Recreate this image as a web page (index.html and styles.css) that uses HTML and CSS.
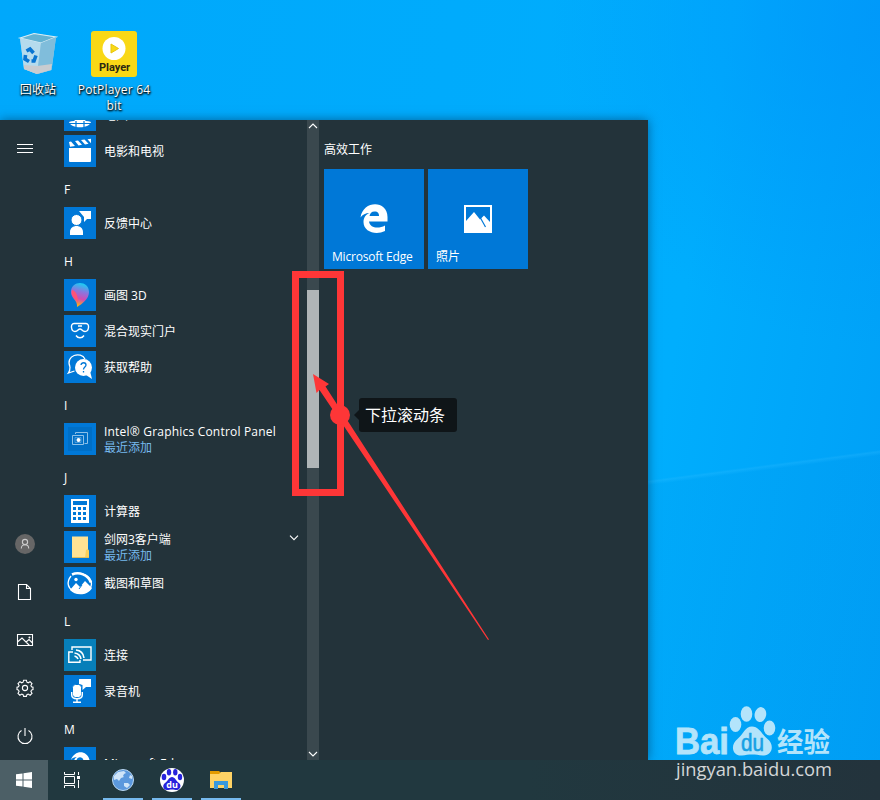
FILE: index.html
```html
<!DOCTYPE html>
<html lang="zh-CN">
<head>
  <meta charset="UTF-8">
  <meta name="viewport" content="width=device-width, initial-scale=1.0">
  <title>开始菜单</title>
  <link rel="stylesheet" href="styles.css">
</head>
<body>
  <div class="screen">
    <!-- Desktop icons -->
    <div class="desktop">
      <div class="shortcut">
        <svg width="48" height="48" viewBox="0 0 48 48">
          <path d="M6 8 L20 3.500 L42 7 L37.500 40 L23 44 L10 39 Z" fill="#9fcfe6"/>
          <path d="M6 8 L20 3.500 L42 7 L27 13 Z" fill="#64b2d2" stroke="#d8edf5" stroke-width="1.200"/>
          <path d="M6 8 L27 13 L23 44 L10 39 Z" fill="#b5dbed"/>
          <path d="M27 13 L42 7 L37.500 40 L23 44 Z" fill="#80bddb"/>
          <path d="M10 35 L23 36 L38 34 L37 40 L23 44 L10 39 Z" fill="#c9ccd0"/>
          <g fill="none" stroke="#0874d1" stroke-width="3.600">
            <path d="M12.500 21 L16 19 L19.500 23"/>
            <path d="M22 25.500 L20 31 L17.500 31"/>
            <path d="M15 31.500 L11 29 L11.500 25"/>
          </g>
        </svg>
        <span>回收站</span>
      </div>
      <div class="shortcut">
        <svg width="48" height="48" viewBox="0 0 48 48">
          <rect x="1" y="1" width="46" height="46" rx="3" fill="#f9d816"/>
          <circle cx="24" cy="18.500" r="11.500" fill="#fff"/>
          <path d="M21 14 L28.500 18.500 L21 23 Z" fill="#f9d816" stroke="#e8c60c"/>
          <text class="player-text" x="24.500" y="41" text-anchor="middle">Player</text>
        </svg>
        <span>PotPlayer 64<br>bit</span>
      </div>
    </div>

    <!-- Start menu -->
    <div class="start-menu">
      <div class="rail">
        <svg class="rail-menu" width="18" height="18" viewBox="0 0 18 18"><path d="M1 4.500h16M1 8.500h16M1 12.500h16"/></svg>
        <div class="rail-bottom">
          <svg width="20" height="20" viewBox="0 0 20 20">
            <circle cx="10" cy="10" r="10" fill="#666" stroke="none"/>
            <g stroke="#ccc"><circle cx="10" cy="8" r="2.600"/><path d="M6.300 14.500c0-5 7.400-5 7.400 0"/></g>
          </svg>
          <svg width="20" height="20" viewBox="0 0 20 20"><path d="M3.500 2.500h8l4 4v11h-12zM11.500 2.500v4h4"/></svg>
          <svg width="20" height="20" viewBox="0 0 20 20"><path d="M2.500 4.500h15v11h-15zM2.500 12l4.500-4 7.500 7.500M11 12l3-2.500 3.500 3.500"/><circle cx="14.500" cy="7.500" r=".5"/></svg>
          <svg width="20" height="20" viewBox="0 0 20 20">
            <circle cx="10" cy="10" r="2.600"/>
            <path d="M8.600 2.200h2.800l.5 2 1.300.6 1.900-1.100 1.900 1.900-1.100 1.900.6 1.300 1.500.4v2.400l-1.500.5-.6 1.300 1.100 1.900-1.900 1.900-1.900-1.100-1.300.6-.5 1.700H8.600l-.5-1.700-1.300-.6-1.900 1.100L3 15.300l1.100-1.900-.6-1.300-1.500-.5V9.200l1.500-.4.600-1.300L3 5.600l1.900-1.900 1.900 1.100 1.300-.6z"/>
          </svg>
          <svg width="20" height="20" viewBox="0 0 20 20"><path d="M6.500 4.500a7 7 0 1 0 7 0M10 2v8"/></svg>
        </div>
      </div>

      <div class="apps">
        <div class="app">
          <svg class="app-icon" viewBox="0 0 32 32">
            <circle cx="16" cy="17" r="7" fill="#fff"/>
            <path d="M5 23c6-2 16-2 22 0-2 7-20 7-22 0z" fill="#fff"/>
            <path d="M5 24.500h22M12 22v6M20 22v6" stroke="#0078d7" stroke-width="1.200"/>
          </svg>
          <div class="app-name">地图</div>
        </div>
        <div class="app">
          <svg class="app-icon" viewBox="0 0 32 32">
            <path d="M5 13h22v13q0 1-1 1H6q-1 0-1-1z" fill="#fff"/>
            <path d="M5 7l2-.5 4 4.500-5 .8zM11 6l3-.5 4 4.300-3.500.6zM17 5l3.500-.5 4 4.300-3.500.6zM23.500 4.200l3.500-.4v4.400z" fill="#fff"/>
          </svg>
          <div class="app-name">电影和电视</div>
        </div>
        <div class="letter">F</div>
        <div class="app">
          <svg class="app-icon" viewBox="0 0 32 32">
            <path d="M6 28v-3c0-8 13-8 13 0v3zM15 4h12v8h-4l-3 3v-5z" fill="#fff"/>
            <circle cx="12.500" cy="13" r="5.500" fill="#fff" stroke="#0078d7"/>
          </svg>
          <div class="app-name">反馈中心</div>
        </div>
        <div class="letter">H</div>
        <div class="app">
          <svg class="app-icon" viewBox="0 0 32 32">
            <defs>
              <linearGradient id="drop" x1="0.600" y1="0" x2="0.400" y2="1">
                <stop offset="0" stop-color="#17d1f5"/>
                <stop offset=".35" stop-color="#8977df"/>
                <stop offset=".65" stop-color="#d04cb4"/>
                <stop offset="1" stop-color="#ffbd00"/>
              </linearGradient>
            </defs>
            <path d="M13 28c1-7-6-8-6-15 0-12 18-12 18 0 0 7-7 12-12 15z" fill="url(#drop)"/>
            <path d="M8 11c4 1 6 5 6 13-2-5-8-6-6-13z" fill="#ff5376"/>
          </svg>
          <div class="app-name">画图 3D</div>
        </div>
        <div class="app">
          <svg class="app-icon line" viewBox="0 0 32 32">
            <path d="M10 8.500h12c4 0 3 8-1 8-3 0-3-2.500-5-2.500s-2 2.500-5 2.500c-4 0-5-8-1-8zM12 20.500c2 3 6 3 8 0M14 11h4"/>
          </svg>
          <div class="app-name">混合现实门户</div>
        </div>
        <div class="app">
          <svg class="app-icon" viewBox="0 0 32 32">
            <path d="M6 16c-5-12 11-16 15-8M6 16c0 2 0 4-1.500 6l6-2" fill="none" stroke="#fff" stroke-width="1.300"/>
            <circle cx="19.500" cy="16.500" r="8.500" fill="#fff"/>
            <path d="M22 24l6 4-2-8z" fill="#fff"/>
            <path d="M17 14c.5-3 5-3 5 0 0 2-2.500 2-2.500 4.500M19.500 20v1.500" fill="none" stroke="#0078d7" stroke-width="1.300"/>
          </svg>
          <div class="app-name">获取帮助</div>
        </div>
        <div class="letter">I</div>
        <div class="app">
          <svg class="app-icon" viewBox="0 0 32 32">
            <path d="M4 4h24v24H4z" fill="#006fc6"/>
            <g fill="none" stroke="#8cc0e8">
              <path d="M11.500 11V9.500h12v11h-3M8.500 12.500h11v9h-11z"/>
              <path d="M11 14.500h6v5h-6z" opacity=".5"/>
            </g>
            <circle cx="14.500" cy="17" r="2" fill="#fff"/>
          </svg>
          <div class="app-name wide">Intel® Graphics Control Panel<span class="recent">最近添加</span></div>
        </div>
        <div class="letter">J</div>
        <div class="app">
          <svg class="app-icon" viewBox="0 0 32 32">
            <path d="M7 4h18v24H7z" fill="#fff"/>
            <path d="M9 6h14v4H9zM9 12h3v3H9zM14 12h3v3h-3zM19 12h3v3h-3zM9 17h3v3H9zM14 17h3v3h-3zM19 17h3v3h-3zM9 22h3v3H9zM14 22h3v3h-3zM19 22h3v3h-3z" fill="#0078d7"/>
          </svg>
          <div class="app-name">计算器</div>
        </div>
        <div class="app">
          <svg class="app-icon" viewBox="0 0 32 32">
            <path d="M8 5.500h16V19l1 1v7H8z" fill="#ffe293"/>
            <path d="M21 27l1-8 2-1 1 2v7z" fill="#fbcf59"/>
            <path d="M8 26h17v1H8z" fill="#dfbd5c"/>
          </svg>
          <div class="app-name">剑网3客户端<span class="recent">最近添加</span></div>
          <svg class="chevron" width="10" height="6" viewBox="0 0 10 6"><path d="M1 .7l4 4 4-4"/></svg>
        </div>
        <div class="app">
          <svg class="app-icon" viewBox="0 0 32 32">
            <path d="M7 9c-10 13 9 22 18 14 5-6 2-14-7-16" fill="none" stroke="#fff" stroke-width="1.300"/>
            <path d="M6 23l6-7 4 4 5-6 7 7c-4 8-17 8-22 2z" fill="#fff"/>
            <path d="M8 7.500c7-3 16 0 19 8" fill="none" stroke="#fff" stroke-width="2.600"/>
            <circle cx="12" cy="12.500" r="1.700" fill="#fff"/>
            <path d="M15 22l3-4" stroke="#0078d7"/>
          </svg>
          <div class="app-name">截图和草图</div>
        </div>
        <div class="letter">L</div>
        <div class="app">
          <svg class="app-icon teal line" viewBox="0 0 32 32">
            <path d="M8 11V8h19v13h-8M9 13H4.800v10.200H16V21"/>
            <path d="M10.500 17c2 .5 3 1.500 3.500 3M10.500 14c4 .5 6 3 6.500 6M12 11c5 .5 7.500 4 8 8" stroke-width="1.600"/>
          </svg>
          <div class="app-name">连接</div>
        </div>
        <div class="app">
          <svg class="app-icon" viewBox="0 0 32 32">
            <path d="M15 4h12v8h-5l-3.500 3v-5L15 9z" fill="#fff"/>
            <rect x="8.500" y="9.500" width="9" height="13" rx="3" fill="#fff" stroke="#0078d7"/>
            <path d="M7.700 17v3c0 5 10.600 5 10.600 0v-3M13 24v3M9 27.300h8" fill="none" stroke="#fff" stroke-width="1.400"/>
          </svg>
          <div class="app-name">录音机</div>
        </div>
        <div class="letter">M</div>
        <div class="app">
          <svg class="app-icon" viewBox="0 0 32 32">
            <path d="M6 17C8 1 26 2 26 17H12c1-7 8-6 8-1" fill="#fff"/>
            <path d="M6 14c2-3 4-4 7-4-2 1-3 3-3 5H6zM12.500 14c0-5 7-5 7 0z" fill="#0078d7"/>
          </svg>
          <div class="app-name">Microsoft Edge</div>
        </div>
      </div>

      <div class="scrollbar">
        <svg width="10" height="6" viewBox="0 0 10 6"><path d="M1 5l4-4 4 4"/></svg>
        <div class="thumb"></div>
        <svg width="10" height="6" viewBox="0 0 10 6"><path d="M1 1l4 4 4-4"/></svg>
      </div>

      <div class="tiles">
        <div class="tiles-title">高效工作</div>
        <div class="tile-row">
          <div class="tile">
            <svg width="30" height="30" viewBox="0 0 30 30">
              <path d="M1.500 13.500C4-4 28.500-4 28.500 13v4.500H10c1 7 10 7.500 16 4v5.500C17 31.500 4.500 28 4.500 18c0-5 3-8 6-9-4 0-7 1.500-9 4.500z" fill="#fff"/>
              <path d="M10.500 12c.5-2.500 2-4.500 5-4.500 3.500 0 4.500 2 4.500 4.500z" fill="#0078d7"/>
            </svg>
            <span class="narrow">Microsoft Edge</span>
          </div>
          <div class="tile">
            <svg width="30" height="30" viewBox="0 0 30 30">
              <path d="M1 1h28v28H1z" fill="#fff"/>
              <path d="M3 3h24v15l-6-6.500-3 3-1 1-6-7.500-8 9z" fill="#0078d7"/>
              <path d="M17.500 14l5 9" stroke="#0078d7" stroke-width="1.200"/>
            </svg>
            <span>照片</span>
          </div>
        </div>
      </div>
    </div>

    <!-- Taskbar -->
    <div class="taskbar">
      <div class="start-button">
        <svg width="16" height="16" viewBox="0 0 16 16"><path d="M0 2.300l6.500-.9v6.100H0zM7.500 1.200L16 0v7.500H7.500zM0 8.500h6.500v6.100L0 13.700zM7.500 8.500H16V16l-8.500-1.200z" fill="#fff"/></svg>
      </div>
      <div class="task-view">
        <svg width="18" height="16" viewBox="0 0 18 16">
          <path d="M1.500 0v2.500h10V0M1.500 16v-2.500h10V16M1.500 4.500h10v7h-10zM15.500 0v3M15.500 8v8" fill="none" stroke="#fff"/>
          <path d="M14 4h3v3h-3z" fill="#fff"/>
        </svg>
      </div>
      <div class="task">
        <svg width="24" height="24" viewBox="0 0 24 24">
          <circle cx="12" cy="12" r="10.500" fill="#5b98dd" stroke="#b9d7f2"/>
          <path d="M3 8l4-4 6-1 2 2-2 1-1 2 1 1-3 1-2 3-2-2-3 1zM13 15l4 0 2 2-3 3-3-2zM19 7l2 1 0 3-3-1z" fill="#cfe4f8"/>
        </svg>
      </div>
      <div class="task">
        <svg width="24" height="24" viewBox="0 0 24 24">
          <circle cx="12" cy="12" r="12" fill="#fff"/>
          <g fill="#2723dc">
            <ellipse cx="4" cy="9" rx="2.300" ry="3.200"/><ellipse cx="9" cy="4.300" rx="2.200" ry="3.200"/>
            <ellipse cx="15.300" cy="4.300" rx="2.200" ry="3.200"/><ellipse cx="20" cy="9" rx="2.200" ry="3.200"/>
            <path d="M12 9c3 0 4 4 7 6s1 7-2 7c-2 0-3-.5-5-.5S9 22 7 22c-4 0-5-5-2-7s4-6 7-6z"/>
          </g>
          <text class="du-text" x="12" y="20" text-anchor="middle">du</text>
        </svg>
      </div>
      <div class="task">
        <svg width="24" height="24" viewBox="0 0 24 24">
          <path d="M1 3h9l2 2v2H1z" fill="#e39b00"/>
          <path d="M1 6h9l2-2h11v16H1z" fill="#ffd365"/>
          <path d="M5 21v-8h14v8h-4v-4H9v4z" fill="#3a99dd"/>
        </svg>
      </div>
    </div>

    <!-- Annotations over the menu -->
    <div class="mark-box"></div>
    <svg class="mark-arrow" width="190" height="280" viewBox="305 365 190 280">
      <path d="M313 374L329 384L325.500 386.500L489 639.500L488 640L319.500 390L316.500 393Z"/>
      <circle cx="340" cy="415" r="10"/>
    </svg>
    <div class="tip">下拉滚动条</div>

    <!-- Watermark -->
    <svg class="watermark" width="170" height="84" viewBox="670 702 170 84">
      <g class="logo">
        <text class="bai" x="675" y="754" textLength="54" lengthAdjust="spacingAndGlyphs">Bai</text>
        <ellipse cx="735.500" cy="724.500" rx="5.800" ry="7.500"/>
        <ellipse cx="746.500" cy="714" rx="5.800" ry="7.700"/>
        <ellipse cx="760.500" cy="714.500" rx="5.800" ry="7.500" transform="rotate(10 760 714)"/>
        <ellipse cx="769.500" cy="728" rx="5.800" ry="7.500"/>
        <path d="M752 726.500c7 0 10 8 15 12 9 7 4 18-4 17-5-.5-7-1-11-1s-6 .5-10 1c-9 1-13-10-4-17 5-4 7-12 14-12z"/>
        <text class="jingyan" x="777" y="752" textLength="53" lengthAdjust="spacingAndGlyphs">经验</text>
      </g>
      <text class="du" x="741" y="750.500" textLength="23" lengthAdjust="spacingAndGlyphs">du</text>
      <text class="url" x="676" y="776" textLength="156" lengthAdjust="spacingAndGlyphs">jingyan.baidu.com</text>
    </svg>
  </div>
</body>
</html>
```
FILE: styles.css
```css
* {
  margin: 0;
  padding: 0;
  box-sizing: border-box;
}

body {
  font-family: "Open Sans", "Noto Sans CJK SC", sans-serif;
  font-size: 12px;
  color: #fff;
}

.screen {
  position: relative;
  width: 880px;
  height: 800px;
  overflow: hidden;
  display: flex;
  flex-direction: column;
  /* faint light beam, then the blue wallpaper */
  background:
    linear-gradient(172.6deg, transparent 61.7%, rgba(60, 190, 255, 0.22) 61.9%, rgba(0, 140, 225, 0.12) 62.3%, rgba(0, 140, 225, 0.1) 90%),
    radial-gradient(circle at 100% 2%, rgba(0, 148, 250, 0.7) 0, rgba(0, 150, 250, 0) 330px),
    linear-gradient(100deg, #00a8fb 0, #00abfc 45%, #00aefd 72%, #009ef6 100%);
}

/* Desktop */
.desktop {
  display: flex;
  height: 120px;
  padding-top: 30px;
}

.shortcut {
  width: 76px;
  display: flex;
  flex-direction: column;
  align-items: center;
  gap: 4px;
  line-height: 16px;
  letter-spacing: 0.2px;
  text-align: center;
  white-space: nowrap;
  text-shadow: 1px 1px 2px #000, 0 1px 2px #000;
}

.player-text {
  font-family: Roboto, sans-serif;
  font-size: 11px;
  font-weight: bold;
  letter-spacing: 0;
  fill: #2b2713;
  text-shadow: none;
}

/* Start menu */
.start-menu {
  display: flex;
  width: 648px;
  height: 640px;
  background-color: #23333a;
  box-shadow: 0 0 10px rgba(0, 30, 60, 0.5);
  overflow: hidden;
}

.rail {
  width: 50px;
  display: flex;
  flex-direction: column;
  justify-content: space-between;
  align-items: center;
  padding: 20px 0 14px;
}

.rail svg,
.chevron,
.scrollbar svg {
  fill: none;
  stroke: #fff;
  stroke-width: 1.1;
}

.rail-bottom {
  display: flex;
  flex-direction: column;
  gap: 28px;
}

.apps {
  width: 257px;
  padding-left: 14px;
  margin-top: -23px;
}

.app {
  display: flex;
  align-items: center;
  gap: 8px;
  height: 36px;
}

.app-icon {
  width: 32px;
  height: 32px;
  flex-shrink: 0;
  background-color: #0078d7;
}

.app-icon.line {
  fill: none;
  stroke: #fff;
  stroke-width: 1.4;
}

.app-icon.teal {
  background-color: #077fb9;
}

.app-name {
  flex: 1;
  padding-top: 2px;
  line-height: 16px;
  white-space: nowrap;
}

.app-name.wide {
  letter-spacing: 0.2px;
}

.recent {
  display: block;
  letter-spacing: 0;
  color: #76b9ed;
}

.chevron {
  margin: -18px 8px 0 0;
}

.letter {
  height: 36px;
  line-height: 42px;
}

.scrollbar {
  width: 12px;
  height: 640px;
  display: flex;
  flex-direction: column;
  align-items: center;
  padding: 3px 0;
  background-color: #3a484e;
}

.thumb {
  width: 12px;
  height: 178px;
  margin: 161px 0 auto;
  background-color: #afb5b7;
}

.tiles {
  padding: 21px 0 0 5px;
}

.tiles-title {
  line-height: 17px;
  margin-bottom: 11px;
}

.tile-row {
  display: flex;
  gap: 4px;
}

.tile {
  width: 100px;
  height: 100px;
  display: flex;
  flex-direction: column;
  justify-content: space-between;
  padding: 35px 8px 4px;
  background-color: #0078d7;
  line-height: 16px;
  white-space: nowrap;
}

.tile svg {
  align-self: center;
}

.narrow {
  letter-spacing: -0.2px;
}

/* Taskbar */
.taskbar {
  display: flex;
  height: 40px;
  background: linear-gradient(90deg, #21383f 0, #21383f 60%, #23333c 100%);
}

.start-button,
.task-view {
  width: 48px;
  display: flex;
  align-items: center;
  justify-content: center;
}

.start-button {
  background-color: #4c5f66;
}

.task {
  width: 40px;
  margin-left: 9px;
  padding-top: 2px;
  display: flex;
  align-items: center;
  justify-content: center;
  border-bottom: 2px solid #76b9ed;
}

.task-view + .task {
  margin-left: 7px;
}

.du-text {
  font-size: 9px;
  font-weight: bold;
  fill: #fff;
}

/* Annotations */
.mark-box {
  position: absolute;
  left: 292px;
  top: 271px;
  width: 52px;
  height: 225px;
  border: 7px solid #fe3637;
}

.mark-arrow {
  position: absolute;
  left: 305px;
  top: 365px;
  fill: #fe3637;
}

.tip {
  position: absolute;
  left: 359px;
  top: 398px;
  width: 98px;
  height: 34px;
  padding-left: 6px;
  border-radius: 3px;
  background-color: #0f1518;
  font-size: 16px;
  line-height: 34px;
}

.tip::before {
  content: "";
  position: absolute;
  left: -5px;
  top: 12px;
  border: 5px solid transparent;
  border-left: 0;
  border-right-color: #0f1518;
}

/* Watermark */
.watermark {
  position: absolute;
  left: 670px;
  top: 702px;
}

.logo {
  fill: #b3e4fb;
  font-weight: bold;
}

.bai {
  font-family: "Liberation Sans", sans-serif;
  font-size: 36px;
  stroke: #b3e4fb;
  stroke-width: 0.8;
}

.jingyan {
  font-family: "Noto Sans CJK SC", sans-serif;
  font-size: 27px;
}

.du {
  font-family: "Liberation Sans", sans-serif;
  font-size: 23px;
  fill: #16a0e4;
  stroke: #16a0e4;
  stroke-width: 0.6;
}

.url {
  font-size: 19px;
  fill: #d3d6d8;
}
```
